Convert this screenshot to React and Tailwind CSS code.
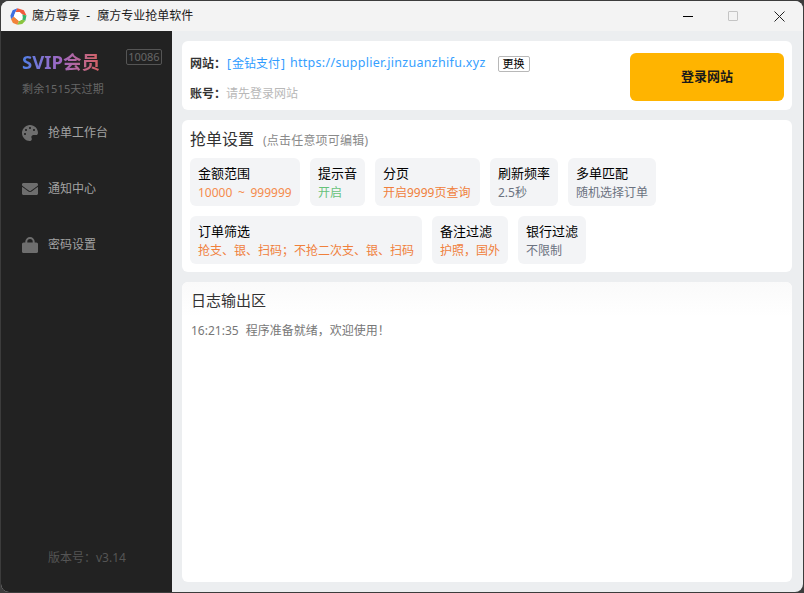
import { FaPalette, FaEnvelope } from "react-icons/fa";

const LockIcon = ({ className }) => (
    <svg className={className} viewBox="0 0 16 16" fill="currentColor">
        <path d="M3.3 6 V4.7 a4.7 4.7 0 0 1 9.4 0 V6 H10.7 V4.7 a2.7 2.7 0 0 0 -5.4 0 V6 Z" />
        <rect x="0" y="5.4" width="16" height="10.6" rx="1.6" />
    </svg>
);

const menu = [
    { icon: FaPalette, label: "抢单工作台" },
    { icon: FaEnvelope, label: "通知中心" },
    { icon: LockIcon, label: "密码设置" },
];

const rowOne = [
    { title: "金额范围", value: "10000 ~ 999999", color: "text-[#f58b4c] [word-spacing:2.5px]", width: "w-[110px]" },
    { title: "提示音", value: "开启", color: "text-[#67c27a]", width: "w-[55px]" },
    { title: "分页", value: "开启9999页查询", color: "text-[#f0803c]", width: "w-[105px]" },
    { title: "刷新频率", value: "2.5秒", color: "text-[#6b7280]", width: "w-[68px]" },
    { title: "多单匹配", value: "随机选择订单", color: "text-[#6b7280]", width: "w-[88px]" },
];

const rowTwo = [
    { title: "订单筛选", value: "抢支、银、扫码；不抢二次支、银、扫码", color: "text-[#f0803c]", width: "w-[232px]" },
    { title: "备注过滤", value: "护照，国外", color: "text-[#f0803c]", width: "w-[76px]" },
    { title: "银行过滤", value: "不限制", color: "text-[#6b7280]", width: "w-[68px]" },
];

const Logo = () => (
    <svg width="17" height="17" viewBox="0 0 16 16">
        <path d="M7 0.3 L13 2 L15.5 7 L11.5 6 L9 3.8 L5 4 Z" fill="#ef5a3c" />
        <path d="M7 0.3 L2.5 2.2 L0.4 7 L1 10.5 L3.6 8 L5 4 Z" fill="#3f6fe0" />
        <path d="M1 10.5 L2.8 14 L7 15.7 L8.5 12.3 L3.6 8 Z" fill="#f2833a" />
        <path d="M7 15.7 L11.5 15 L14.5 12 L11.5 10.8 L8.5 12.3 Z" fill="#8ac43f" />
        <path d="M14.5 12 L15.5 7 L11.5 6 L11.8 9 L11.5 10.8 Z" fill="#35b56a" />
        <path d="M5 4 L9 3.8 L11.5 6 L11.8 9 L11.5 10.8 L8.5 12.3 L3.6 8 Z" fill="#ffffff" />
    </svg>
);

const Chip = ({ title, value, color, width }) => (
    <div className={`${width} h-12 shrink-0 rounded-md bg-[#f3f4f6] pl-2 pt-[6px]`}>
        <div className="text-[13px] leading-[19px] whitespace-nowrap text-black">{title}</div>
        <div className={`text-xs leading-[18px] mt-px whitespace-nowrap ${color}`}>{value}</div>
    </div>
);

export default function App() {
    return (
        <div className="w-[804px] h-[593px] bg-[#3c3c3c] pt-px font-['Noto_Sans','Noto_Sans_CJK_SC',sans-serif]">
            <div className="w-[802px] h-[591px] ml-px flex flex-col overflow-hidden rounded-lg bg-[#eceef0]">
                <div className="h-[30px] shrink-0 flex items-center bg-[#f3f3f3] pl-[9px]">
                    <Logo />
                    <span className="ml-[5px] text-xs text-[#1a1a1a] whitespace-nowrap">魔方尊享&nbsp; -&nbsp; <span className="ml-px">魔方专业抢单软件</span></span>
                    <div className="ml-auto flex items-center">
                        <div className="w-[46px] flex justify-center"><div className="w-[10px] h-px bg-black"></div></div>
                        <div className="w-[46px] flex justify-center -ml-px"><div className="w-[10px] h-[10px] border border-[#c4c4c4] rounded-[1px]"></div></div>
                        <div className="w-[46px] mr-px flex justify-center">
                            <svg width="11" height="11" viewBox="0 0 11 11" stroke="#222" strokeWidth="1" fill="none">
                                <path d="M0.5 0.5 L10.5 10.5 M10.5 0.5 L0.5 10.5" />
                            </svg>
                        </div>
                    </div>
                </div>
                <div className="flex-1 flex min-h-0">
                    <div className="w-[171px] shrink-0 flex flex-col bg-[#222222] pl-[21px]">
                        <div className="flex items-start pt-[18px]">
                            <span className="text-[18.5px] leading-[26px] font-bold bg-gradient-to-r from-[#4c7fe6] via-[#a066c0] to-[#d4605f] bg-clip-text text-transparent">SVIP会员</span>
                            <span className="ml-[26px] w-9 h-4 border border-[#555] rounded-[2px] text-[11px] leading-[14px] text-center text-[#666]">10086</span>
                        </div>
                        <div className="mt-[6px] text-[11px] tracking-[0.2px] leading-4 text-[#666] whitespace-nowrap">剩余1515天过期</div>
                        <div className="mt-[27px] flex flex-col gap-[38px]">
                            {menu.map(({ icon: Icon, label }) => (
                                <div key={label} className="flex items-center h-[18px]">
                                    <Icon className="w-4 h-4 text-[#6e6e6e]" />
                                    <span className="ml-[10px] text-xs text-[#a3a3a3]">{label}</span>
                                </div>
                            ))}
                        </div>
                        <div className="mt-auto mb-[26px] ml-[26px] text-xs text-[#555]">版本号：v3.14</div>
                    </div>
                    <div className="flex-1 flex flex-col gap-[10px] pl-[10px] pr-[11px] pt-[10px] pb-[10px]">
                        <div className="h-[69px] shrink-0 flex items-center justify-between rounded-md bg-white pl-2 pr-2">
                            <div className="flex flex-col gap-[10px] pt-[6px]">
                                <div className="flex items-center h-5 text-xs whitespace-nowrap">
                                    <span className="font-bold text-[#333]">网站：</span>
                                    <span className="ml-px text-[#2f9bff]">[<span className="mx-px">金钻支付</span>]</span>
                                    <span className="ml-[5px] text-[#35a0ff] text-[12.5px] tracking-[0.3px]">https://supplier.jinzuanzhifu.xyz</span>
                                    <span className="ml-3 h-4 w-8 border border-[#b8b8b8] rounded-[2px] text-[11px] leading-[14px] text-center text-black">更换</span>
                                </div>
                                <div className="flex items-center h-5 text-xs whitespace-nowrap">
                                    <span className="font-bold text-[#333]">账号：</span>
                                    <span className="text-[#b8b8b8]">请先登录网站</span>
                                </div>
                            </div>
                            <button className="w-[154px] h-12 mt-[2px] rounded-md bg-[#ffb400] text-[13px] font-bold text-[#1a1a1a]">登录网站</button>
                        </div>
                        <div className="h-[152px] shrink-0 rounded-md bg-white px-2 pt-[7px]">
                            <div className="flex items-baseline h-[24px] whitespace-nowrap">
                                <span className="text-base text-[#333]">抢单设置</span>
                                <span className="ml-[9px] text-xs tracking-[0.2px] text-[#8a8a8a]">(点击任意项可编辑)</span>
                            </div>
                            <div className="mt-[7px] flex gap-[10px]">
                                {rowOne.map(chip => <Chip key={chip.title} {...chip} />)}
                            </div>
                            <div className="mt-[10px] flex gap-[10px]">
                                {rowTwo.map(chip => <Chip key={chip.title} {...chip} />)}
                            </div>
                        </div>
                        <div className="flex-1 rounded-md bg-white">
                            <div className="h-[35px] pl-[9px] pt-[6px] text-[15px] leading-[24px] text-[#333] rounded-t-md bg-gradient-to-b from-[#fafafa] to-white">日志输出区</div>
                            <div className="mt-[5px] pl-[9px] text-xs leading-[18px] text-[#777] whitespace-nowrap">16:21:35<span className="ml-[7px]">程序准备就绪，欢迎使用！</span></div>
                        </div>
                    </div>
                </div>
            </div>
        </div>
    );
}
